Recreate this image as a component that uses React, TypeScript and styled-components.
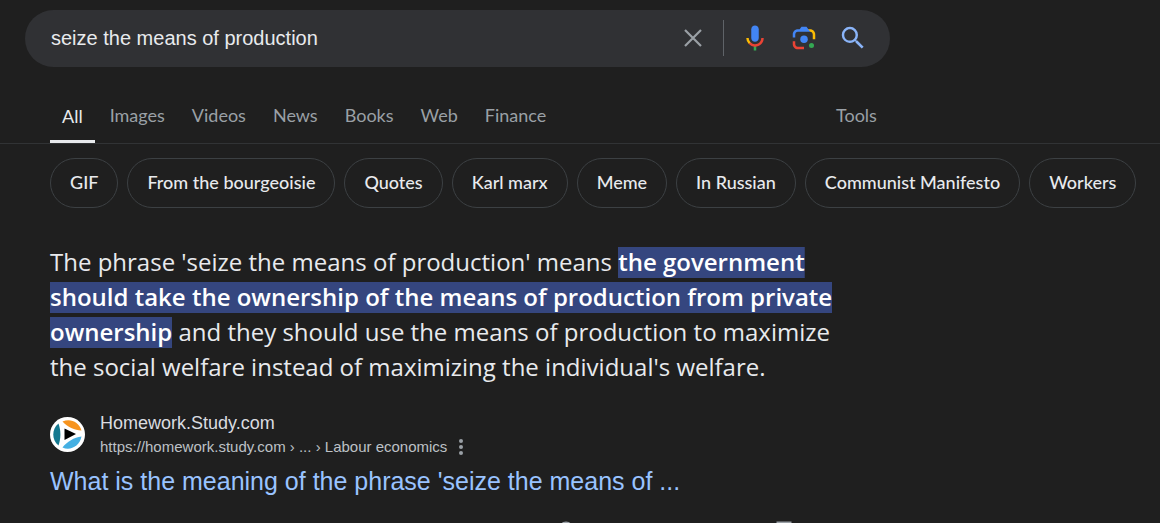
import React, { useState } from "react";
import styled, { createGlobalStyle } from "styled-components";

const GlobalStyle = createGlobalStyle`
  *, *::before, *::after { box-sizing: border-box; }
  body {
    margin: 0;
    overflow: hidden;
    background: #1f1f1f;
    color: #e8eaed;
    font-family: "Liberation Sans", Arial, sans-serif;
  }
`;

const answerFont = `"Open Sans", "Noto Sans", sans-serif`;
const navFont = `Lato, "Open Sans", sans-serif`;

const Page = styled.div`
  padding-top: 10px;
`;

const SearchBar = styled.form`
  display: flex;
  align-items: center;
  width: calc(100% - 50px);
  max-width: 865px;
  height: 57px;
  margin: 0 25px;
  padding: 0 13px 2px 26px;
  border-radius: 29px;
  background: #303134;
`;

const SearchInput = styled.input`
  flex: 1;
  min-width: 0;
  padding: 2px 0 0;
  border: 0;
  outline: 0;
  background: none;
  color: #e8eaed;
  font: 20px "Liberation Sans", Arial, sans-serif;
`;

const IconButton = styled.button`
  display: flex;
  align-items: center;
  justify-content: center;
  width: 49px;
  height: 36px;
  padding: 0;
  border: 0;
  background: none;
  color: #9aa0a6;
  cursor: pointer;
`;

const Divider = styled.span`
  width: 1px;
  height: 36px;
  margin: 0 6px;
  background: #5f6368;
`;

const TabBar = styled.nav`
  display: flex;
  margin-top: 23px;
  padding: 0 50px;
  border-bottom: 1px solid #313335;
`;

const TabList = styled.div`
  display: flex;
  gap: 27px;
  width: 786px;
`;

const Tab = styled.a<{ $active?: boolean }>`
  height: 53px;
  margin-right: ${(p) => (p.$active ? "-12px" : "0")};
  padding: ${(p) => (p.$active ? "0 12px" : "0")};
  border-bottom: 3px solid ${(p) => (p.$active ? "#e8eaed" : "transparent")};
  color: ${(p) => (p.$active ? "#e8eaed" : "#9aa0a6")};
  font: 18px/${(p) => (p.$active ? "52px" : "50px")} ${navFont};
  text-decoration: none;
`;

const ToolsButton = styled.button`
  height: 50px;
  padding: 0;
  border: 0;
  background: none;
  color: #9aa0a6;
  font: 18px/50px ${navFont};
  cursor: pointer;
`;

const Chips = styled.div`
  display: flex;
  gap: 9px;
  padding: 14px 0 0 50px;
`;

const Chip = styled.a`
  flex: none;
  height: 50px;
  padding: 0 19px;
  border: 1px solid #3c4043;
  border-radius: 25px;
  color: #e8eaed;
  font: 500 18px/46px ${navFont};
  text-decoration: none;
`;

const Results = styled.main`
  max-width: 890px;
  padding: 36px 50px 0;
`;

const Answer = styled.p`
  margin: 0;
  font: 24px/35px ${answerFont};
`;

const Highlight = styled.b`
  background: linear-gradient(#35467f, #35467f) bottom / 100% 31px no-repeat;
  box-decoration-break: clone;
  -webkit-box-decoration-break: clone;
  color: #fff;
  font-weight: 600;
`;

const Source = styled.div`
  display: flex;
  align-items: center;
  gap: 15px;
  margin-top: 25px;
`;

const SiteText = styled.div`
  padding-top: 2px;
`;

const SiteName = styled.div`
  color: #dadce0;
  font-size: 18px;
  line-height: 24px;
`;

const UrlRow = styled.div`
  display: flex;
  align-items: center;
  color: #bdc1c6;
  font-size: 15px;
  line-height: 24px;
`;

const MenuButton = styled(IconButton)`
  width: 28px;
  height: 24px;
`;

const ResultTitle = styled.h3`
  margin: 6px 0 0;
  font-size: 25px;
  font-weight: 400;
  line-height: 32px;
`;

const TitleLink = styled.a`
  color: #99c3ff;
  text-decoration: none;
`;

const Footer = styled.footer`
  display: flex;
  gap: 202px;
  margin-top: 24px;
  padding-left: 508px;
  color: #9aa0a6;
`;

const CloseIcon = () => (
  <svg width="20" height="20" viewBox="0 0 20 20" fill="none" stroke="#9aa0a6" strokeWidth="2.2">
    <path d="M2 2l16 16M18 2L2 18" />
  </svg>
);

const MicIcon = () => (
  <svg width="30" height="30" viewBox="0 0 24 24">
    <path fill="#4285f4" d="M12 15c1.66 0 3-1.31 3-2.97V5c0-1.66-1.34-3-3-3S9 3.34 9 5v7.03C9 13.690 10.340 15 12 15z" />
    <path fill="#34a853" d="M11 18.080h2V22h-2z" />
    <path fill="#fbbc04" d="M7.050 16.870A6.900 6.900 0 0 1 5 12h2c0 1.450.560 2.420 1.470 3.380v.320l-1.150 1.180z" />
    <path fill="#ea4335" d="M12 16.930a4.970 5.250 0 0 1-3.540-1.550l-1.410 1.490c1.260 1.340 3.020 2.130 4.950 2.130 3.870 0 6.990-2.920 6.990-7h-1.990c0 2.920-2.240 4.930-5 4.930z" />
  </svg>
);

const LensIcon = () => (
  <svg width="30" height="30" viewBox="0 0 192 192">
    <circle fill="#34a853" cx="144.070" cy="144" r="16" />
    <circle fill="#4285f4" cx="96.070" cy="104" r="24" />
    <path fill="#ea4335" d="M24 135.200c0 18.110 14.690 32.800 32.800 32.800H96v-16l-40.100-.100c-8.800 0-15.900-8.190-15.900-17.900v-18H24z" />
    <path fill="#fbbc04" d="M168 72.800c0-18.110-14.690-32.800-32.800-32.800H116l20 16c8.800 0 16 8.290 16 18v30h16z" />
    <path fill="#4285f4" d="M112 24H80L68 40H56.800C38.690 40 24 54.690 24 72.800V92h16V74c0-9.710 7.200-18 16-18h80l-24-32z" />
  </svg>
);

const SearchIcon = () => (
  <svg width="30" height="30" viewBox="0 0 24 24" fill="#8ab4f8">
    <path d="M15.500 14h-.790l-.280-.270A6.471 6.471 0 0 0 16 9.500 6.500 6.500 0 1 0 9.500 16c1.610 0 3.090-.590 4.230-1.570l.270.280v.790l5 4.990L20.490 19l-4.990-5zm-6 0C7.010 14 5 11.990 5 9.500S7.010 5 9.500 5 14 7.010 14 9.500 11.990 14 9.500 14z" />
  </svg>
);

const SiteIcon = () => (
  <svg width="35" height="35" viewBox="0 0 35 35">
    <circle cx="17.500" cy="17.500" r="17.500" fill="#fff" />
    <path fill="#f7941e" d="M12.500 4.500C20 1 29 4.500 31.500 13.500C24.500 13.500 17.500 10 12.500 4.500z" />
    <path fill="#14788f" d="M8.500 6.500C1.500 12 1.500 23 8.500 28.500C11 21.500 11 13.500 8.500 6.500z" />
    <path fill="#45b0e3" d="M12.500 30.500C20 34 29.500 29.500 31.500 19.500C24 20.500 17 24.500 12.500 30.500z" />
    <path fill="#000" d="M14.500 11.500L26 17L14.500 23z" />
  </svg>
);

const DotsIcon = () => (
  <svg width="4" height="16" viewBox="0 0 4 16" fill="#9aa0a6">
    <circle cx="2" cy="2" r="2" />
    <circle cx="2" cy="8" r="2" />
    <circle cx="2" cy="14" r="2" />
  </svg>
);

const tabs = ["Images", "Videos", "News", "Books", "Web", "Finance"];
const chips = ["GIF", "From the bourgeoisie", "Quotes", "Karl marx", "Meme", "In Russian", "Communist Manifesto", "Workers"];

export default function App() {
  const [query, setQuery] = useState("seize the means of production");
  return (
    <Page>
      <GlobalStyle />
      <SearchBar role="search" onSubmit={(e) => e.preventDefault()}>
        <SearchInput aria-label="Search" value={query} onChange={(e) => setQuery(e.target.value)} />
        <IconButton type="button" aria-label="Clear" onClick={() => setQuery("")}><CloseIcon /></IconButton>
        <Divider />
        <IconButton type="button" aria-label="Search by voice"><MicIcon /></IconButton>
        <IconButton type="button" aria-label="Search by image"><LensIcon /></IconButton>
        <IconButton type="submit" aria-label="Search"><SearchIcon /></IconButton>
      </SearchBar>
      <TabBar>
        <TabList>
          <Tab href="#" $active aria-current="page">All</Tab>
          {tabs.map((t) => <Tab key={t} href="#">{t}</Tab>)}
        </TabList>
        <ToolsButton type="button">Tools</ToolsButton>
      </TabBar>
      <Chips>
        {chips.map((c) => <Chip key={c} href="#">{c}</Chip>)}
      </Chips>
      <Results>
        <Answer>
          The phrase 'seize the means of production' means{" "}
          <Highlight>the government should take the ownership of the means of production from private ownership</Highlight>{" "}
          and they should use the means of production to maximize the social welfare instead of maximizing the individual's welfare.
        </Answer>
        <Source>
          <SiteIcon />
          <SiteText>
            <SiteName>Homework.Study.com</SiteName>
            <UrlRow>
              https://homework.study.com › ... › Labour economics
              <MenuButton type="button" aria-label="About this result"><DotsIcon /></MenuButton>
            </UrlRow>
          </SiteText>
        </Source>
        <ResultTitle>
          <TitleLink href="#">What is the meaning of the phrase 'seize the means of ...</TitleLink>
        </ResultTitle>
        <Footer>
          <svg width="16" height="16" viewBox="0 0 16 16" fill="none" stroke="currentColor" strokeWidth="3"><circle cx="8" cy="8" r="6" /></svg>
          <svg width="16" height="16" viewBox="0 0 16 16" fill="none" stroke="currentColor" strokeWidth="3"><path d="M2 2h12v12H2z" /></svg>
        </Footer>
      </Results>
    </Page>
  );
}
